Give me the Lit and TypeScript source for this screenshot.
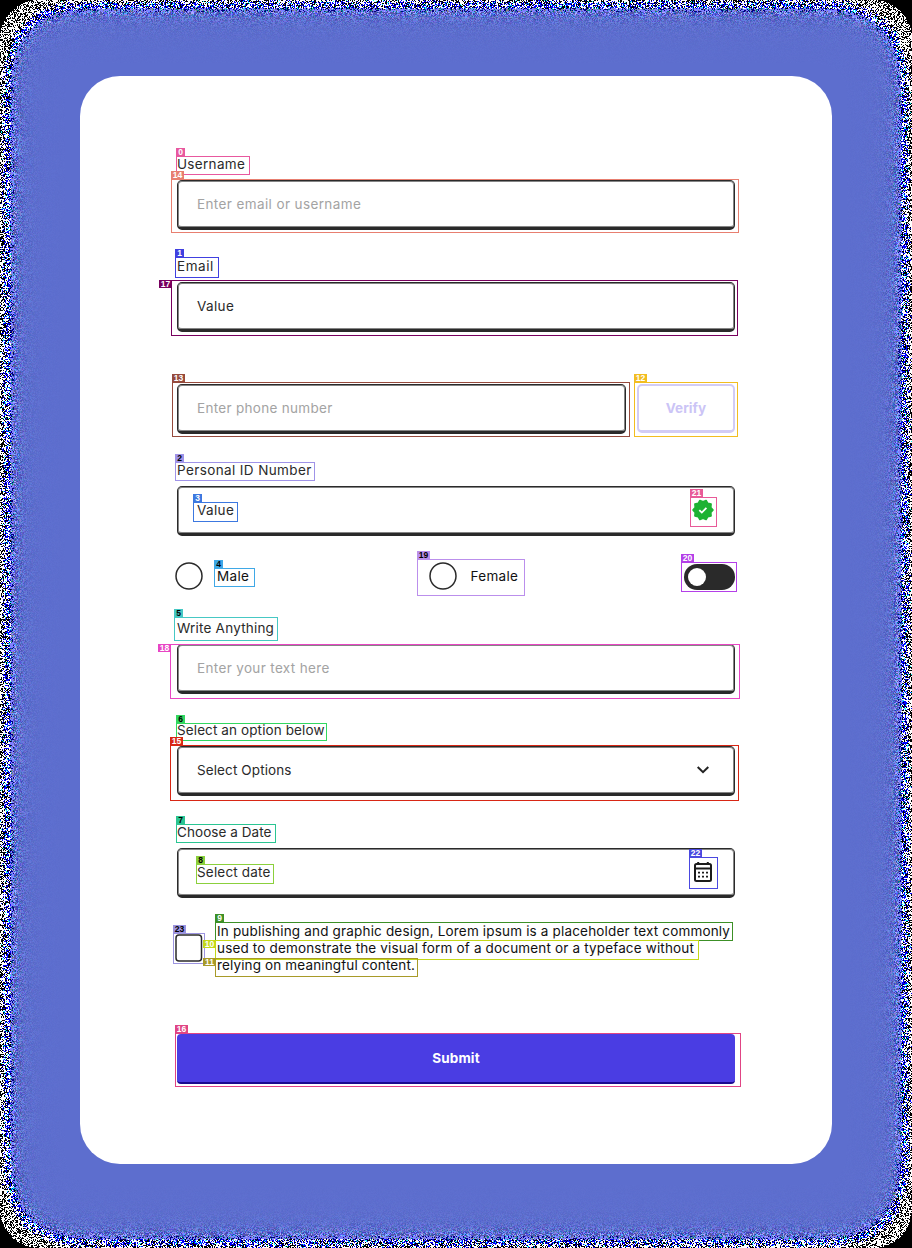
import { LitElement, html, svg, css, nothing } from "lit";
import { customElement, property } from "lit/decorators.js";

/** A single line of text tracked out to a given width. */
@customElement("tracked-text")
class TrackedText extends LitElement {
  @property() text = "";
  @property({ type: Number }) width = 0;
  static styles = css`
    :host { display: inline-block; white-space: pre; }
    .t { display: inline-block; white-space: pre; }
  `;
  firstUpdated() {
    const el = this.renderRoot.querySelector(".t") as HTMLElement;
    const natural = el.getBoundingClientRect().width;
    el.style.letterSpacing = `${(this.width - natural) / (this.text.length - 0.5)}px`;
  }
  render() {
    return html`<span class="t">${this.text}</span>`;
  }
}

/** Dithered glow around the card: low coverage turns into coarse grain. */
@customElement("grain-glow")
class GrainGlow extends LitElement {
  static styles = css`
    :host { display: block; }
    canvas { display: block; }
  `;
  firstUpdated() {
    const W = 912, H = 1248;
    const c = this.renderRoot.querySelector("canvas") as HTMLCanvasElement;
    const ctx = c.getContext("2d")!;
    const img = ctx.createImageData(W, H);
    let s = 12345;
    const rnd = () => {
      s = (s + 0x6d2b79f5) | 0;
      let t = Math.imul(s ^ (s >>> 15), 1 | s);
      t = (t + Math.imul(t ^ (t >>> 7), 61 | t)) ^ t;
      return ((t ^ (t >>> 14)) >>> 0) / 4294967296;
    };
    const cdf = (z: number) => {
      const x = Math.abs(z);
      const t = 1 / (1 + 0.2316419 * x);
      const p = 0.3989423 * Math.exp((-x * x) / 2) * t *
        (0.3193815 + t * (-0.3565638 + t * (1.781478 + t * (-1.821256 + t * 1.330274))));
      return z > 0 ? 1 - p : p;
    };
    const base = [93, 110, 206];
    const R = 39;
    for (let y = 0; y < H; y++) {
      const dy = Math.min(y, H - 1 - y) + 0.5;
      const fy = cdf((dy - 55) / 18.5);
      for (let x = 0; x < W; x++) {
        const dx = Math.min(x, W - 1 - x) + 0.5;
        const i = (y * W + x) * 4;
        const d = img.data;
        d[i + 3] = 255;
        if (dx < R && dy < R && Math.hypot(R - dx, R - dy) > R) continue;
        const A = 255 * cdf((dx - 57) / 18.5) * fy;
        const n = rnd() - 0.5;
        const q = Math.round(A + (rnd() - 0.5) * 0.5);
        if (q < 1) {
          const v = n > -0.06 ? 255 : 0;
          d[i] = d[i + 1] = d[i + 2] = v;
          continue;
        }
        for (let k = 0; k < 3; k++) {
          d[i + k] = Math.max(0, Math.min(255, (Math.round((base[k] * q) / 255 + n * 1.3) / q) * 255));
        }
        if (q > 170) {
          for (let k = 0; k < 3; k++) d[i + k] = base[k];
        }
      }
    }
    ctx.putImageData(img, 0, 0);
  }
  render() {
    return html`<canvas width="912" height="1248"></canvas>`;
  }
}

type Mark = { n: number; x: number; y: number; r: number; b: number; c: string; dark?: boolean; side?: boolean };
const marks: Mark[] = [
  { n: 0, x: 176, y: 156, r: 250, b: 175, c: "#e8589f" },
  { n: 14, x: 171, y: 179, r: 739, b: 233, c: "#e87f70" },
  { n: 1, x: 175, y: 257, r: 219, b: 278, c: "#4040e0" },
  { n: 17, x: 171, y: 280, r: 738, b: 336, c: "#78005e", side: true },
  { n: 13, x: 172, y: 382, r: 630, b: 437, c: "#964a3c" },
  { n: 12, x: 634, y: 382, r: 738, b: 437, c: "#f2bd20" },
  { n: 2, x: 175, y: 462, r: 315, b: 481, c: "#9f93e8", dark: true },
  { n: 3, x: 193, y: 502, r: 238, b: 522, c: "#3c78e0" },
  { n: 4, x: 214, y: 568, r: 255, b: 587, c: "#3fa8e6", dark: true },
  { n: 21, x: 690, y: 497, r: 717, b: 527, c: "#e85a98" },
  { n: 20, x: 681, y: 562, r: 737, b: 592, c: "#b43fe8" },
  { n: 19, x: 417, y: 559, r: 525, b: 596, c: "#bb8fec", dark: true },
  { n: 5, x: 174, y: 617, r: 278, b: 641, c: "#46c8c4", dark: true },
  { n: 18, x: 170, y: 644, r: 740, b: 699, c: "#e845c4", side: true },
  { n: 6, x: 176, y: 723, r: 327, b: 741, c: "#32d860", dark: true },
  { n: 15, x: 170, y: 745, r: 739, b: 801, c: "#d82614" },
  { n: 7, x: 176, y: 824, r: 276, b: 843, c: "#2ac592", dark: true },
  { n: 8, x: 196, y: 864, r: 274, b: 884, c: "#8bd03c", dark: true },
  { n: 22, x: 689, y: 857, r: 718, b: 889, c: "#4a48e0" },
  { n: 23, x: 173, y: 933, r: 205, b: 964, c: "#9c94e0", dark: true },
  { n: 9, x: 215, y: 922, r: 733, b: 941, c: "#3c9026" },
  { n: 10, x: 215, y: 940, r: 699, b: 960, c: "#c4d818", side: true },
  { n: 11, x: 215, y: 958, r: 418, b: 977, c: "#a89a28", side: true },
  { n: 16, x: 175, y: 1033, r: 741, b: 1087, c: "#e04484" },
];

const starPoints = Array.from({ length: 20 }, (_, i) => {
  const r = i % 2 ? 8.2 : 10;
  const a = (i * Math.PI) / 10;
  return `${(12 + r * Math.cos(a)).toFixed(2)},${(12 + r * Math.sin(a)).toFixed(2)}`;
}).join(" ");

const t = (text: string, width: number) => html`<tracked-text .text=${text} .width=${width}></tracked-text>`;

@customElement("app-root")
class AppRoot extends LitElement {
  static styles = css`
    :host {
      display: block;
      font-family: Inter, "Liberation Sans", sans-serif;
      font-size: 13.5px;
      line-height: 16px;
      color: #2a2a2a;
    }
    * { box-sizing: border-box; }
    .page { position: relative; display: grid; width: 912px; height: 1248px; overflow: hidden; }
    .page > * { grid-area: 1 / 1; }
    .card {
      position: relative;
      margin: 76px 80px 84px;
      padding: 80px 97px 0;
      background: #fff;
      border-radius: 40px;
      display: flex;
      flex-direction: column;
    }
    .field { height: 74px; margin-bottom: 28px; display: flex; flex-direction: column; gap: 8px; }
    .label { height: 16px; }
    .box {
      height: 50px;
      flex: none;
      display: flex;
      align-items: center;
      justify-content: space-between;
      padding: 0 19px;
      border: solid #2a2a2a;
      border-width: 1px 1px 3px;
      border-radius: 5px;
      box-shadow: inset 0 0 0 1px #858585;
    }
    .ghost { color: #a3a3a3; }
    .split { display: grid; grid-template-columns: 449px 98px; gap: 11px; }
    .verify {
      height: 49px;
      display: flex;
      align-items: center;
      justify-content: center;
      border: 2px solid #d2ccf5;
      border-bottom-width: 3px;
      border-radius: 5px;
      color: #cbc4f6;
      font-weight: 700;
    }
    .choices { height: 28px; margin: -2px 0 30px -2px; display: flex; align-items: center; color: #111; }
    .choice { display: flex; align-items: center; gap: 14px; }
    .first { width: 253.5px; }
    .toggle {
      width: 51px; height: 26px; border-radius: 13px; background: #2a2a2a;
      margin-left: auto; margin-top: 2px; padding: 3px 3.5px;
    }
    .knob { width: 18px; height: 18px; border-radius: 50%; background: #fff; margin-top: 1px; }
    .terms { height: 52px; margin: -4px 0 60px -2px; display: flex; align-items: center; gap: 14px; color: #111; }
    .lines { display: flex; flex-direction: column; line-height: 17px; }
    .lines > * { height: 17px; }
    .submit {
      height: 50px;
      display: flex;
      align-items: center;
      justify-content: center;
      background: #4a3de3;
      border-bottom: 2px solid #1a0a90;
      border-radius: 4px;
      color: #fff;
      font-weight: 700;
    }
    svg { display: block; flex: none; }
    .mark { position: absolute; border: 1px solid; pointer-events: none; }
    .tag {
      position: absolute;
      left: -1px;
      bottom: 100%;
      margin-bottom: 1px;
      height: 8px;
      min-width: 9px;
      font: 700 8.5px/9px "Liberation Sans", sans-serif;
      text-align: center;
      color: #fff;
    }
    .wide { width: 13px; }
    .dark { color: #000; }
    .side { left: auto; right: 100%; bottom: auto; top: -1px; margin: 0; }
  `;

  field(label: string, lw: number, body: unknown) {
    return html`<div class="field">
      <div class="label">${label ? t(label, lw) : nothing}</div>
      ${body}
    </div>`;
  }

  radio() {
    return svg`<svg width="28" height="28" viewBox="0 0 28 28">
      <circle cx="14" cy="14" r="13" fill="#fff" stroke="#2a2a2a" stroke-width="1.5"></circle></svg>`;
  }

  render() {
    return html`<div class="page">
      <grain-glow></grain-glow>
      <div class="card">
        ${this.field("Username", 68, html`<div class="box ghost">${t("Enter email or username", 164)}</div>`)}
        ${this.field("Email", 36.5, html`<div class="box">${t("Value", 37)}</div>`)}
        ${this.field("", 0, html`<div class="split">
          <div class="box ghost">${t("Enter phone number", 135.5)}</div>
          <div class="verify">${t("Verify", 40.5)}</div>
        </div>`)}
        ${this.field("Personal ID Number", 134.5, html`<div class="box">
          ${t("Value", 37)}
          <svg width="24" height="24" viewBox="0 0 24 24">
            <polygon points=${starPoints} fill="#1db233" stroke="#1db233" stroke-width="1.6" stroke-linejoin="round"></polygon>
            <path d="M8.3 12.2l2.5 2.4 4.6-4.7" fill="none" stroke="#fff" stroke-width="1.8"></path>
          </svg>
        </div>`)}
        <div class="choices">
          <div class="choice first">${this.radio()}${t("Male", 32)}</div>
          <div class="choice">${this.radio()}${t("Female", 47.5)}</div>
          <div class="toggle"><div class="knob"></div></div>
        </div>
        ${this.field("Write Anything", 97, html`<div class="box ghost">${t("Enter your text here", 132.5)}</div>`)}
        ${this.field("Select an option below", 147.5, html`<div class="box">
          ${t("Select Options", 94.5)}
          <svg width="24" height="24" viewBox="0 0 24 24">
            <path d="M6.7 9l5.3 5.2 5.3-5.2" fill="none" stroke="#222" stroke-width="2"></path>
          </svg>
        </div>`)}
        ${this.field("Choose a Date", 94.5, html`<div class="box">
          ${t("Select date", 73.5)}
          <svg width="24" height="24" viewBox="0 0 24 24">
            <rect x="4" y="4" width="16" height="17" rx="1.5" fill="none" stroke="#1c1c1c" stroke-width="2"></rect>
            <path d="M4 8.5h16M7.2 2v3M16.8 2v3" fill="none" stroke="#1c1c1c" stroke-width="2"></path>
            <path d="M7 12.7h2m2 0h2m2 0h2M7 16.7h2m2 0h2m2 0h2" fill="none" stroke="#1c1c1c" stroke-width="1.8"></path>
          </svg>
        </div>`)}
        <div class="terms">
          <svg width="28" height="28" viewBox="0 0 28 28">
            <rect x="1" y="1" width="25.5" height="26" rx="3" fill="#fff" stroke="#2a2a2a" stroke-width="1.5"></rect>
          </svg>
          <div class="lines">
            ${t("In publishing and graphic design, Lorem ipsum is a placeholder text commonly", 513)}
            ${t("used to demonstrate the visual form of a document or a typeface without", 477)}
            ${t("relying on meaningful content.", 198)}
          </div>
        </div>
        <div class="submit">${t("Submit", 47.5)}</div>
      </div>
      ${marks.map((m) => html`<div class="mark"
        style="left:${m.x}px;top:${m.y}px;width:${m.r - m.x}px;height:${m.b - m.y}px;border-color:${m.c}">
        <div class="tag ${m.n > 9 ? "wide" : ""} ${m.dark ? "dark" : ""} ${m.side ? "side" : ""}"
          style="background:${m.c}">${m.n}</div>
      </div>`)}
    </div>`;
  }
}
